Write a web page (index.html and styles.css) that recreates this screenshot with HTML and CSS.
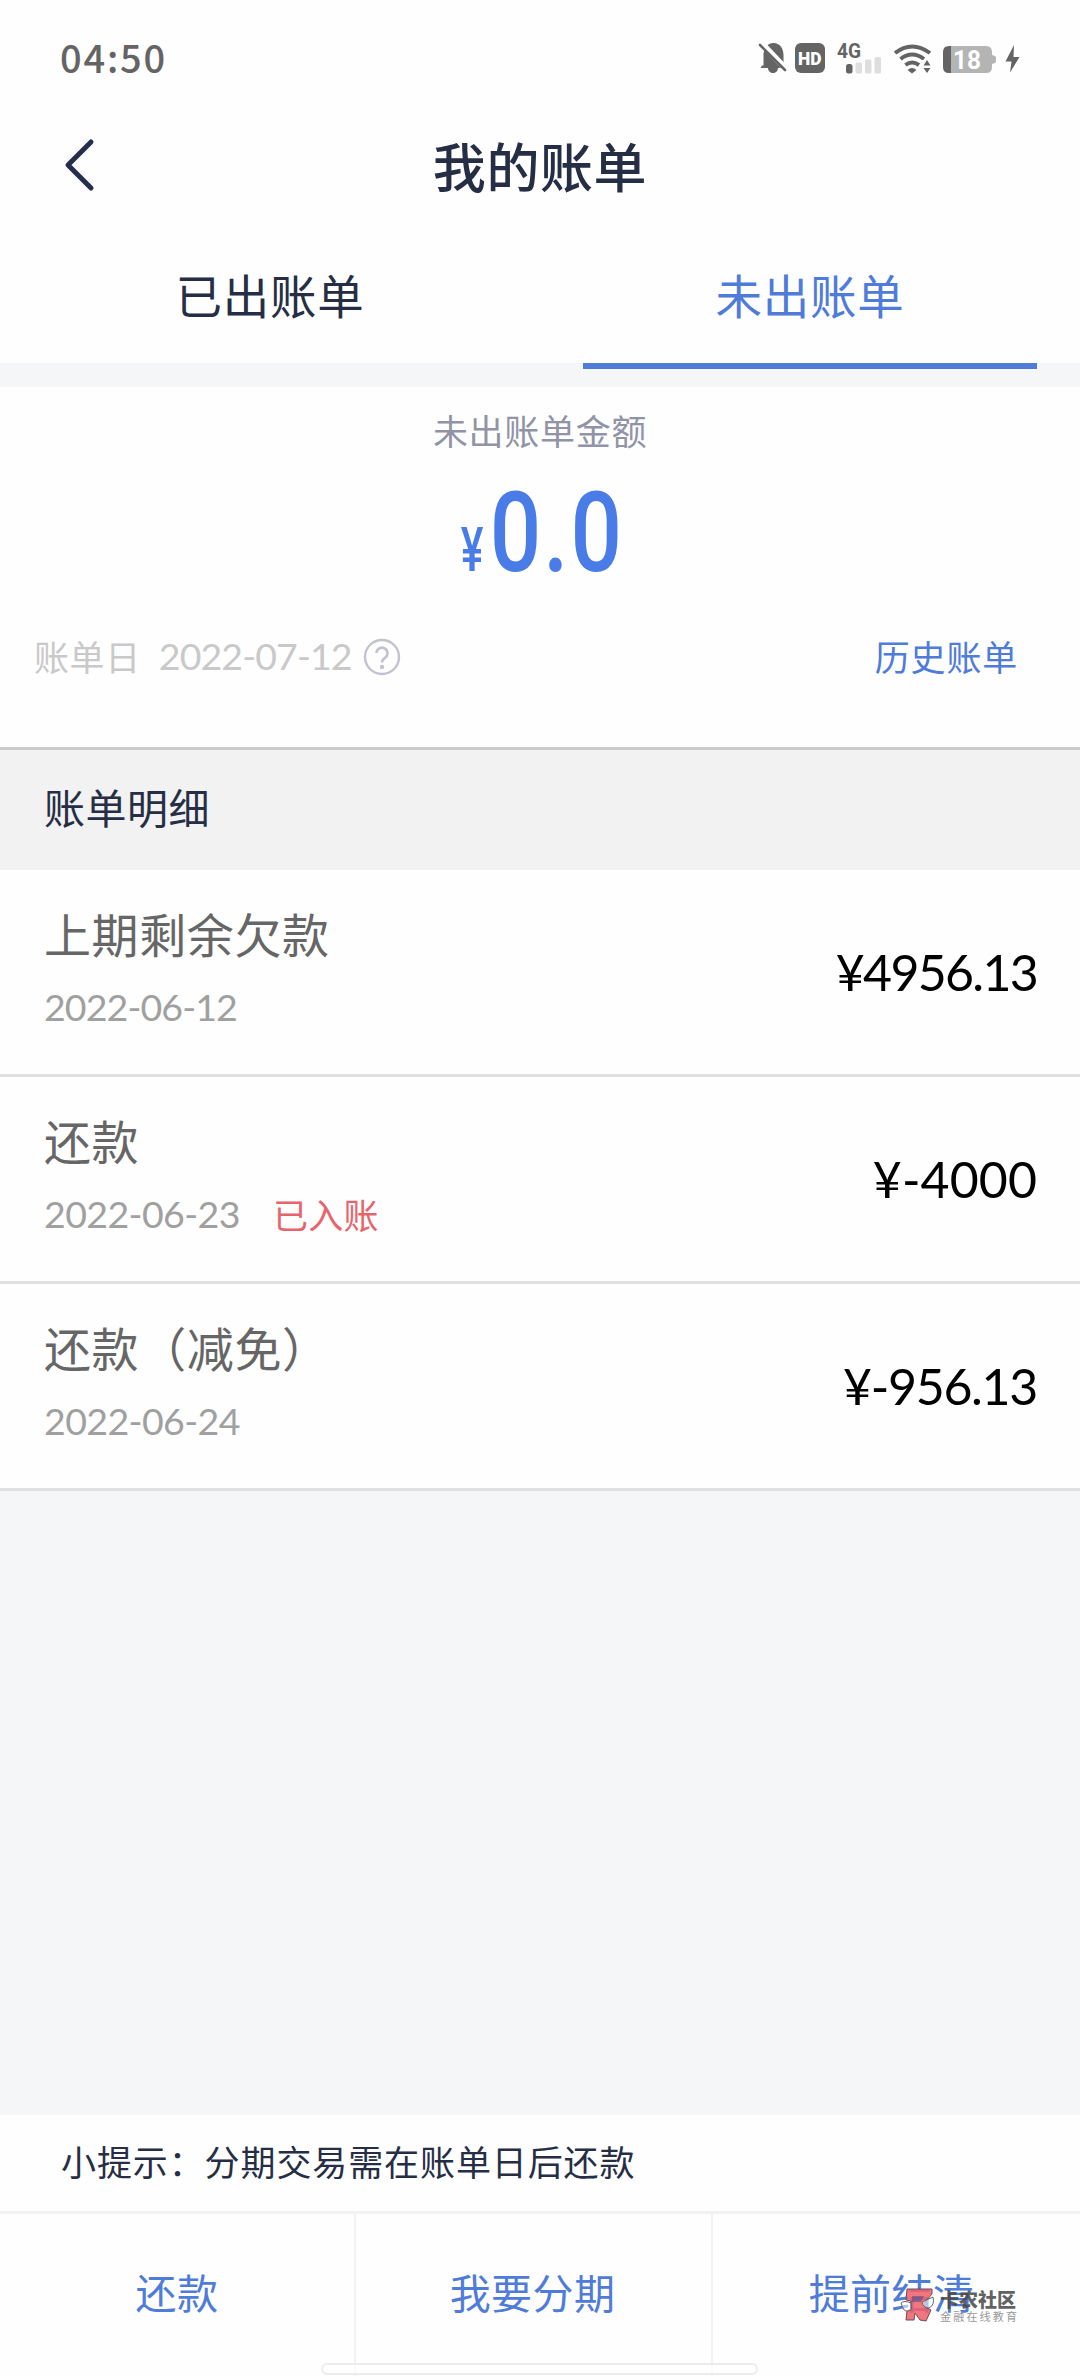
FILE: index.html
```html
<!DOCTYPE html>
<html lang="zh-CN">
<head>
<meta charset="utf-8">
<title>我的账单</title>
<link rel="stylesheet" href="styles.css">
</head>
<body>
<div class="screen">
  <div class="status">
    <span class="clock">04:50</span>
    <svg class="status-icons" width="264" height="50" viewBox="757 33 264 50">
      <g fill="#646464">
        <path d="M762 65.500h1.500V55c0-6.500 3.700-12 10-12s10 5.500 10 12v10.500l2.500 2.500H778c0 3-2.500 5-5 5s-5-2-5-5h-7.500z"/>
        <path d="M761 42.500l26.500 28" stroke="#fefefe" stroke-width="6"/>
        <path d="M760 45l25 25" stroke="#646464" stroke-width="2.600" stroke-linecap="round"/>
        <rect x="795" y="43" width="30" height="30" rx="6"/>
        <rect x="846" y="64" width="6.500" height="9.500" rx="2.500"/>
        <g fill="#dedede"><rect x="855.500" y="62.500" width="6.500" height="11" rx="1.500"/><rect x="865" y="59.500" width="6.500" height="14" rx="1.500"/><rect x="874.500" y="57" width="6.500" height="16.500" rx="1.500"/></g>
        <g fill="none" stroke="#646464" stroke-width="4"><path d="M895 53q17-13 35 0"/><path d="M900.500 59q11.500-9 23.500 0"/><path d="M905.500 65q6.500-5 13.500 0"/></g>
        <path d="M907.500 70q4.500-4 9 0l-4.500 3.500z"/>
        <path d="M922 60h11v14h-11z" fill="#fefefe"/>
        <path d="M927 60l3.500 5.500h-7zM927 73l3.500-5h-7z"/>
        <path d="M951 46h35q6 0 6 6v3l3 1q1 0 1 3.500t-1 3.500l-3 1v3q0 6-6 6h-35z" fill="#b4b4b4"/>
        <path d="M951 46v27h-2q-6 0-6-6V52q0-6 6-6z"/>
        <path d="M1014 45l-8.500 16.500h6l-1.500 11 9.500-15.500h-6z"/>
      </g>
      <text x="798" y="64.500" class="hd" textLength="23.500" lengthAdjust="spacingAndGlyphs">HD</text>
      <text x="837" y="57.500" class="net" textLength="24" lengthAdjust="spacingAndGlyphs">4G</text>
      <text x="953" y="69" class="charge" textLength="28" lengthAdjust="spacingAndGlyphs">18</text>
    </svg>
  </div>

  <header class="header">
    <svg class="back" width="36" height="60" viewBox="0 0 36 60"><path d="M29 7L6 30l23 23" fill="none" stroke="#262e4d" stroke-width="5" stroke-linecap="round" stroke-linejoin="round"/></svg>
    <h1 class="title">我的账单</h1>
  </header>

  <nav class="tabs">
    <div class="tab">已出账单</div>
    <div class="tab active">未出账单</div>
  </nav>

  <section class="summary">
    <div class="label">未出账单金额</div>
    <div class="total"><span class="yen">¥</span><span class="sum">0.0</span></div>
    <div class="meta">
      <span class="bill-day">账单日</span>
      <span class="bill-date">2022-07-12</span>
      <svg class="help" width="38" height="38" viewBox="0 0 38 38" fill="none" stroke="#c2c3cf" stroke-width="2.400"><circle cx="19" cy="19" r="17"/><path d="M13.500 15a5.500 5.500 0 1 1 8.500 4.800q-3 2-3 4.700" stroke-width="2.600"/><circle cx="19" cy="29" r="1" fill="#c2c3cf"/></svg>
      <a class="history">历史账单</a>
    </div>
  </section>

  <h2 class="section-title">账单明细</h2>
  <ul class="list">
    <li class="row">
      <div class="info"><div class="name">上期剩余欠款</div><div class="sub"><span class="date">2022-06-12</span></div></div>
      <div class="amount">¥4956.13</div>
    </li>
    <li class="row">
      <div class="info"><div class="name">还款</div><div class="sub"><span class="date wide">2022-06-23</span><span class="badge">已入账</span></div></div>
      <div class="amount whole">¥-4000</div>
    </li>
    <li class="row">
      <div class="info"><div class="name">还款（减免）</div><div class="sub"><span class="date wide">2022-06-24</span></div></div>
      <div class="amount negative">¥-956.13</div>
    </li>
  </ul>

  <footer class="footer">
    <p class="tip">小提示：分期交易需在账单日后还款</p>
    <div class="actions">
      <div class="action">还款</div>
      <div class="action">我要分期</div>
      <div class="action">提前结清</div>
    </div>
  </footer>

  <div class="home-bar"></div>
  <div class="watermark">
    <svg width="36" height="38" viewBox="0 0 36 38">
      <path d="M7 3h25v5l-7 8v5l6 3-5 11-6-1-5-7-1 7H6l1-9 4-2v-8l-5-1z" fill="#f05f69" fill-opacity=".86" stroke="#6d4b5b" stroke-width="1"/>
      <path d="M12 10h12l-3 6h-9z" fill="#514e8c" fill-opacity=".6"/>
      <path d="M1 17q3-3 10 0v7q-6 3-8-2zm21-1l11-5q2 8-4 11-6 0-7-6z" fill="#fff" fill-opacity=".55" stroke="#666" stroke-width="1"/>
    </svg>
    <div class="brand"><div class="brand-name">卡农社区</div><div class="brand-sub">金融在线教育</div></div>
  </div>
</div>
</body>
</html>
```
FILE: styles.css
```css
* { box-sizing: border-box; margin: 0; padding: 0; }
body {
  width: 1080px;
  font-family: "Noto Sans CJK SC", sans-serif;
  color: #262e45;
  background: #f5f6f8;
}
.screen {
  position: relative;
  display: flex;
  flex-direction: column;
  width: 1080px;
  height: 2376px;
  overflow: hidden;
}
.status {
  display: flex;
  justify-content: space-between;
  align-items: center;
  height: 116px;
  padding: 0 59px 0 60px;
  background: #fefefe;
}
.clock { padding-bottom: 3px; font-size: 38px; font-weight: 500; line-height: 56px; letter-spacing: 1.8px; color: #646464; }
.hd, .net, .charge { font-family: Roboto, sans-serif; font-weight: 900; }
.hd { font-size: 19px; fill: #fff; }
.net { font-size: 20px; fill: #646464; font-weight: 700; }
.charge { font-size: 26px; fill: #fff; font-weight: 700; }

.header {
  display: grid;
  grid-template-columns: 120px 1fr 120px;
  align-items: center;
  height: 98px;
  background: #fefefe;
}
.back { margin-left: 62px; }
.title { font-size: 53px; font-weight: 500; line-height: 76px; letter-spacing: .6px; text-align: center; }

.tabs {
  display: flex;
  height: 173px;
  padding-bottom: 24px;
  background: linear-gradient(#fefefe 149px, #f5f6f8 149px);
}
.tab { flex: 1; height: 155px; margin: 0 43px; padding-top: 45px; font-size: 46.5px; line-height: 70px; letter-spacing: .8px; text-align: center; }
.tab.active { color: #4f7bd9; border-bottom: 6px solid #507bd6; }

.summary { height: 363px; padding-top: 19px; background: #fefefe; border-bottom: 3px solid #ccc; }
.label { font-size: 35px; line-height: 48px; letter-spacing: .7px; text-align: center; color: #9194a6; }
.total { display: flex; justify-content: center; align-items: baseline; height: 120px; margin-top: 19px; padding-left: 4px; color: #4a7ce8; font-family: Roboto, sans-serif; font-weight: 500; }
.yen { font-size: 61px; line-height: 120px; transform: scaleX(.7); margin-right: -14px; }
.sum { font-size: 112px; line-height: 120px; letter-spacing: 2.5px; transform: scaleX(.81); margin-right: -12px; }
.meta { display: flex; align-items: center; height: 56px; margin-top: 35px; padding: 0 62px 0 34px; }
.bill-day { font-size: 35px; line-height: 56px; letter-spacing: .6px; color: #c9c9c9; }
.bill-date { width: 204px; margin-left: 18px; font: 400 37.500px/56px Lato, sans-serif; letter-spacing: -.9px; color: #c9c9c9; }
.help { margin-top: 1px; }
.history { margin-left: auto; font-size: 35px; line-height: 54px; letter-spacing: .8px; color: #4f7bd9; }

.section-title { height: 120px; padding: 0 44px; font-size: 41px; font-weight: 400; line-height: 112px; letter-spacing: .5px; background: #f2f2f2; }
.list { list-style: none; }
.row { display: flex; justify-content: space-between; align-items: center; height: 207px; padding: 0 43px 0 44px; background: #fefefe; border-bottom: 3px solid #e0e0e0; }
.name { font-size: 47px; line-height: 70px; letter-spacing: .6px; color: #666; }
.sub { display: flex; align-items: center; height: 54px; margin: 12px 0 13px; }
.date { font: 400 37.500px/54px Lato, sans-serif; letter-spacing: -.9px; color: #a0a0a0; }
.date.wide { letter-spacing: -.6px; }
.badge { margin-left: 33px; font-size: 35px; line-height: 50px; letter-spacing: .3px; color: #e6656c; }
.amount { font: 400 50px/70px Lato, sans-serif; letter-spacing: -1.7px; color: #000; }
.amount.whole { letter-spacing: .1px; }
.amount.negative { letter-spacing: -1.3px; }

.footer { margin-top: auto; background: #fefefe; }
.tip { height: 96px; padding-left: 61px; font-size: 35px; line-height: 91px; letter-spacing: .9px; }
.actions { display: grid; grid-template-columns: 354px 357px 1fr; height: 165px; border-top: 3px solid #f2f2f2; }
.action { font-size: 41px; line-height: 154px; letter-spacing: .4px; text-align: center; color: #4f7bd9; }
.action + .action { padding-right: 2px; border-left: 2px solid #f2f2f2; }
.action:last-child { padding-right: 10px; }

.home-bar { position: absolute; left: 321px; bottom: 1px; width: 437px; height: 12px; border: 2px solid #ececec; border-radius: 6px; background: rgba(255, 255, 255, .7); }
.watermark { position: absolute; left: 900px; top: 2286px; display: flex; gap: 4px; }
.brand { padding-top: 2px; white-space: nowrap; }
.brand-name { font-size: 19px; font-weight: 900; line-height: 21px; color: rgba(70, 70, 70, .85); }
.brand-sub { font-size: 11px; line-height: 15px; letter-spacing: 2.2px; color: #999; }
```
